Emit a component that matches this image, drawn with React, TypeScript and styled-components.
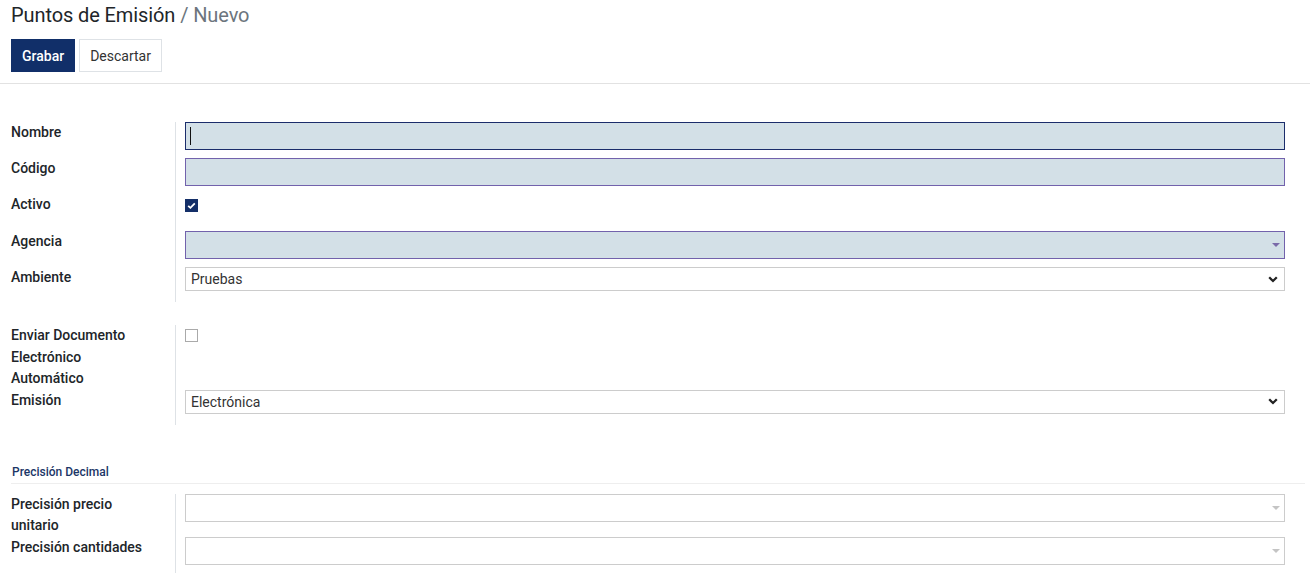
import React from 'react';
import styled, { createGlobalStyle } from 'styled-components';

const GlobalStyle = createGlobalStyle`
  html, body {
    margin: 0;
    padding: 0;
    background: #ffffff;
  }
  body {
    font-family: Roboto, "Liberation Sans", sans-serif;
    font-size: 14px;
    color: #212529;
  }
  * {
    box-sizing: border-box;
  }
`;

const Page = styled.div`
  width: 100%;
  min-height: 578px;
  background: #ffffff;
`;

const ControlPanel = styled.header`
  padding: 3px 11px 11px;
  border-bottom: 1px solid #e2e2e2;
`;

const Breadcrumb = styled.h1`
  margin: 0;
  font-size: 20px;
  font-weight: 400;
  line-height: 24px;
  letter-spacing: -0.1px;
  color: #212529;
`;

const CrumbCurrent = styled.span`
  color: #6c757d;
`;

const Buttons = styled.div`
  display: flex;
  gap: 4px;
  margin-top: 12px;
`;

const Button = styled.button<{ $primary?: boolean }>`
  height: 33px;
  padding: 0 10px;
  font-family: Roboto, "Liberation Sans", sans-serif;
  font-size: 14px;
  font-weight: ${({ $primary }) => ($primary ? 500 : 400)};
  color: ${({ $primary }) => ($primary ? '#ffffff' : '#333333')};
  background: ${({ $primary }) => ($primary ? '#112f69' : '#ffffff')};
  border: 1px solid ${({ $primary }) => ($primary ? '#112f69' : '#dee2e6')};
  border-radius: 0;
  cursor: pointer;
`;

const Sheet = styled.main`
  padding-top: 38px;
`;

const Group = styled.section<{ $gap?: number }>`
  display: grid;
  grid-template-columns: 164px 1fr;
  padding-left: 11px;
  margin-bottom: ${({ $gap }) => $gap ?? 0}px;
`;

const Label = styled.label`
  font-size: 14px;
  font-weight: 500;
  line-height: 21.5px;
  color: #212529;
  padding-right: 24px;
`;

const Field = styled.div`
  border-left: 1px solid #dee2e6;
  padding: 0 25px 8px 9px;
`;

type BoxState = 'focus' | 'required' | 'plain';

const boxBorder = (s: BoxState) =>
  s === 'focus' ? '#1b2d6b' : s === 'required' ? '#7262ac' : '#cccccc';

const TextBox = styled.div<{ $state: BoxState }>`
  position: relative;
  display: flex;
  align-items: center;
  height: 28px;
  padding: 0 6px 0 4px;
  background: ${({ $state }) => ($state === 'plain' ? '#ffffff' : '#d3e0e7')};
  border: 1px solid ${({ $state }) => boxBorder($state)};
`;

const Caret = styled.span`
  display: inline-block;
  width: 1px;
  height: 18px;
  background: #111111;
`;

const DropTriangle = styled.span<{ $color: string }>`
  position: absolute;
  right: 4px;
  top: 11px;
  width: 0;
  height: 0;
  border-left: 4px solid transparent;
  border-right: 4px solid transparent;
  border-top: 4px solid ${({ $color }) => $color};
`;

const SelectBox = styled.div`
  display: flex;
  align-items: center;
  justify-content: space-between;
  height: 24px;
  margin-bottom: 3px;
  padding: 0 6px 0 5px;
  background: #ffffff;
  border: 1px solid #cccccc;
  font-size: 14px;
  color: #333333;
`;

const CheckCell = styled.div<{ $offset: number }>`
  height: 29px;
  padding-top: ${({ $offset }) => $offset}px;
`;

const CheckBox = styled.span<{ $checked?: boolean }>`
  display: flex;
  align-items: center;
  justify-content: center;
  width: 13px;
  height: 13px;
  background: ${({ $checked }) => ($checked ? '#142f68' : '#ffffff')};
  border: 1px solid ${({ $checked }) => ($checked ? '#142f68' : '#aaaaaa')};
`;

const SectionTitle = styled.h2`
  margin: 0 5px 10px 11px;
  padding-left: 1px;
  font-size: 12px;
  font-weight: 500;
  line-height: 21px;
  color: #1b3667;
  border-bottom: 1px solid #eeeeee;
`;

const Chevron = () => (
  <svg width="10" height="7" viewBox="0 0 10 7">
    <polyline points="1.2,1.3 5,5 8.8,1.3" fill="none" stroke="#222" strokeWidth="2.3" />
  </svg>
);

const Tick = () => (
  <svg width="9" height="7" viewBox="0 0 9 7">
    <polyline points="1.2,3.8 3.4,5.8 7.8,1.4" fill="none" stroke="#fff" strokeWidth="1.8" />
  </svg>
);

const Select = ({ value }: { value: string }) => (
  <SelectBox>
    <span>{value}</span>
    <Chevron />
  </SelectBox>
);

export default function App() {
  return (
    <Page>
      <GlobalStyle />
      <ControlPanel>
        <Breadcrumb>
          Puntos de Emisión <CrumbCurrent>/ Nuevo</CrumbCurrent>
        </Breadcrumb>
        <Buttons>
          <Button $primary>Grabar</Button>
          <Button>Descartar</Button>
        </Buttons>
      </ControlPanel>

      <Sheet>
        <Group $gap={23}>
          <Label>Nombre</Label>
          <Field>
            <TextBox $state="focus">
              <Caret />
            </TextBox>
          </Field>
          <Label>Código</Label>
          <Field>
            <TextBox $state="required" />
          </Field>
          <Label>Activo</Label>
          <Field>
            <CheckCell $offset={5}>
              <CheckBox $checked>
                <Tick />
              </CheckBox>
            </CheckCell>
          </Field>
          <Label>Agencia</Label>
          <Field>
            <TextBox $state="required">
              <DropTriangle $color="#7a6aa9" />
            </TextBox>
          </Field>
          <Label>Ambiente</Label>
          <Field>
            <Select value="Pruebas" />
          </Field>
        </Group>

        <Group $gap={37}>
          <Label>Enviar Documento Electrónico Automático</Label>
          <Field>
            <CheckCell $offset={4}>
              <CheckBox />
            </CheckCell>
          </Field>
          <Label>Emisión</Label>
          <Field>
            <Select value="Electrónica" />
          </Field>
        </Group>

        <SectionTitle>Precisión Decimal</SectionTitle>
        <Group>
          <Label>Precisión precio unitario</Label>
          <Field>
            <TextBox $state="plain">
              <DropTriangle $color="#c4c4c4" />
            </TextBox>
          </Field>
          <Label>Precisión cantidades</Label>
          <Field>
            <TextBox $state="plain">
              <DropTriangle $color="#c4c4c4" />
            </TextBox>
          </Field>
        </Group>
      </Sheet>
    </Page>
  );
}
